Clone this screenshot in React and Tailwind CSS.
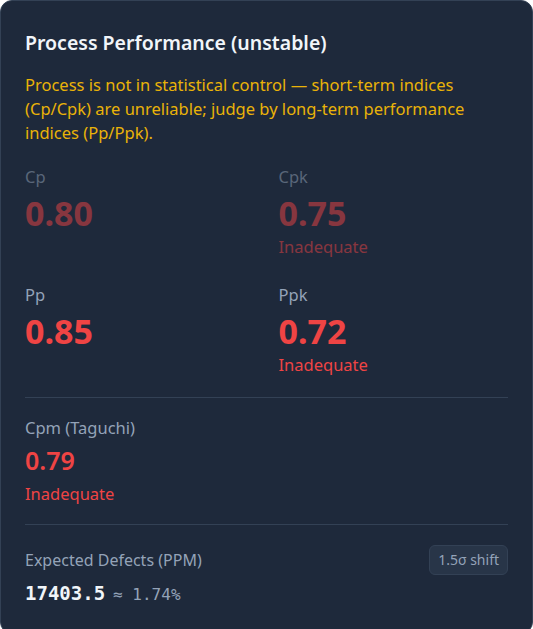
import React from 'react'

const metrics = [
  { label: 'Cp', value: '0.80', dim: true },
  { label: 'Cpk', value: '0.75', status: 'Inadequate', dim: true },
  { label: 'Pp', value: '0.85' },
  { label: 'Ppk', value: '0.72', status: 'Inadequate' },
]

const Metric = ({ label, value, status, dim }) => (
  <div className={dim ? 'opacity-50' : ''}>
    <div className="text-[16.5px] leading-6 text-[#94a3b8]">{label}</div>
    <div className="mt-1 text-[34px] leading-10 font-bold text-[#ef4444]">{value}</div>
    {status && <div className="mt-0.5 text-[16.5px] leading-6 text-[#ef4444]">{status}</div>}
  </div>
)

export default function App() {
  return (
    <div
      className="w-[533px] min-h-[629px] bg-[#1e293b] border border-[#334155] rounded-xl px-6 pt-7 pb-6"
      style={{ fontFamily: '"Noto Sans", "Open Sans", sans-serif' }}
    >
      <h2 className="text-[19.5px] leading-7 font-semibold text-[#f1f5f9]">Process Performance (unstable)</h2>
      <p className="mt-4 text-[16.5px] leading-6 text-[#eab308]">
        Process is not in statistical control — short-term indices (Cp/Cpk) are unreliable; judge by long-term
        performance indices (Pp/Ppk).
      </p>

      <div className="mt-5 grid grid-cols-2 gap-x-6 gap-y-6">
        {metrics.map(m => <Metric key={m.label} {...m} />)}
      </div>

      <div className="mt-5 border-t border-[#334155] pt-[18px]">
        <div className="text-[16.5px] leading-6 text-[#94a3b8]">Cpm (Taguchi)</div>
        <div className="mt-1 text-[25px] leading-8 font-semibold text-[#ef4444]">0.79</div>
        <div className="mt-1.5 text-[16.5px] leading-6 text-[#ef4444]">Inadequate</div>
      </div>

      <div className="mt-[18px] border-t border-[#334155] pt-5">
        <div className="flex items-center justify-between">
          <span className="text-base leading-6 text-[#94a3b8]">Expected Defects (PPM)</span>
          <span className="px-2 py-1 text-sm leading-5 text-[#94a3b8] bg-[#283548] border border-[#334155] rounded-md">
            1.5σ shift
          </span>
        </div>
        <div className="mt-1 leading-7" style={{ fontFamily: '"DejaVu Sans Mono", "Liberation Mono", monospace' }}>
          <span className="text-[19px] font-bold text-[#f1f5f9]">17403.5</span>
          <span className="ml-2 text-base text-[#94a3b8]">≈ 1.74%</span>
        </div>
      </div>
    </div>
  )
}
